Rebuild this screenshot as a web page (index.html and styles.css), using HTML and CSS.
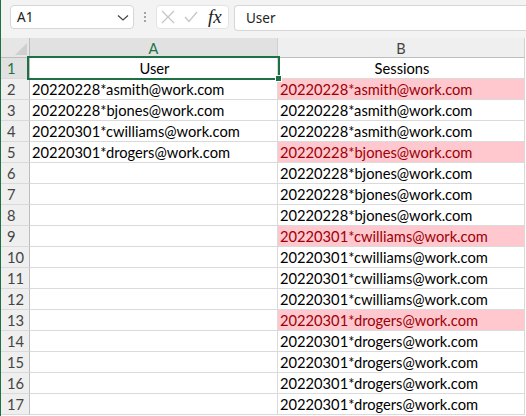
FILE: index.html
```html
<!DOCTYPE html>
<html>
<head>
<meta charset="utf-8">
<link rel="stylesheet" href="styles.css">
</head>
<body>
<div class="app">
  <div class="fbar">
    <div class="namebox">
      <span class="nb-text">A1</span>
      <svg class="chev" width="12" height="8" viewBox="0 0 12 8"><path d="M1 1.5 L6 6 L11 1.5" fill="none" stroke="#444" stroke-width="1.2"/></svg>
    </div>
    <div class="dots"><span></span><span></span><span></span></div>
    <div class="fbtns">
      <svg width="14" height="14" viewBox="0 0 14 14"><path d="M1 1 L13 13 M13 1 L1 13" stroke="#c4c4c4" stroke-width="1.2" fill="none"/></svg>
      <svg width="14" height="12" viewBox="0 0 14 12"><path d="M1 6 L5 10.5 L13 1" stroke="#c4c4c4" stroke-width="1.2" fill="none"/></svg>
      <span class="fx">fx</span>
    </div>
    <div class="finput">User</div>
  </div>
  <div class="sheet">
    <div class="row hdr">
      <div class="rh corner"><svg width="12" height="12" viewBox="0 0 12 12"><path d="M12 0 L12 12 L0 12 Z" fill="#cfcfcf"/></svg></div>
      <div class="ch ca sel">A</div>
      <div class="ch cb">B</div>
    </div>
    <div class="row"><div class="rh sel">1</div><div class="c ca center a1">User<div class="selbox"><div class="handle"></div></div></div><div class="c cb center">Sessions</div></div>
    <div class="row"><div class="rh">2</div><div class="c ca">20220228*asmith@work.com</div><div class="c cb dup">20220228*asmith@work.com</div></div>
    <div class="row"><div class="rh">3</div><div class="c ca">20220228*bjones@work.com</div><div class="c cb">20220228*asmith@work.com</div></div>
    <div class="row"><div class="rh">4</div><div class="c ca">20220301*cwilliams@work.com</div><div class="c cb">20220228*asmith@work.com</div></div>
    <div class="row"><div class="rh">5</div><div class="c ca">20220301*drogers@work.com</div><div class="c cb dup">20220228*bjones@work.com</div></div>
    <div class="row"><div class="rh">6</div><div class="c ca"></div><div class="c cb">20220228*bjones@work.com</div></div>
    <div class="row"><div class="rh">7</div><div class="c ca"></div><div class="c cb">20220228*bjones@work.com</div></div>
    <div class="row"><div class="rh">8</div><div class="c ca"></div><div class="c cb">20220228*bjones@work.com</div></div>
    <div class="row"><div class="rh">9</div><div class="c ca"></div><div class="c cb dup">20220301*cwilliams@work.com</div></div>
    <div class="row"><div class="rh">10</div><div class="c ca"></div><div class="c cb">20220301*cwilliams@work.com</div></div>
    <div class="row"><div class="rh">11</div><div class="c ca"></div><div class="c cb">20220301*cwilliams@work.com</div></div>
    <div class="row"><div class="rh">12</div><div class="c ca"></div><div class="c cb">20220301*cwilliams@work.com</div></div>
    <div class="row"><div class="rh">13</div><div class="c ca"></div><div class="c cb dup">20220301*drogers@work.com</div></div>
    <div class="row"><div class="rh">14</div><div class="c ca"></div><div class="c cb">20220301*drogers@work.com</div></div>
    <div class="row"><div class="rh">15</div><div class="c ca"></div><div class="c cb">20220301*drogers@work.com</div></div>
    <div class="row"><div class="rh">16</div><div class="c ca"></div><div class="c cb">20220301*drogers@work.com</div></div>
    <div class="row"><div class="rh">17</div><div class="c ca"></div><div class="c cb">20220301*drogers@work.com</div></div>
  </div>
</div>
</body>
</html>
```

FILE: styles.css
```css
html, body {
  margin: 0;
  padding: 0;
  background: #ffffff;
}
.app {
  width: 525px;
  height: 416px;
  border-left: 1px solid #1e7145;
  overflow: hidden;
  font-family: Lato, "Liberation Sans", sans-serif;
}
.fbar {
  height: 38px;
  background: #f3f3f3;
  display: flex;
  align-items: flex-start;
  padding-top: 5px;
  box-sizing: border-box;
  font-family: "Noto Sans", "Open Sans", sans-serif;
}
.namebox {
  margin-left: 9px;
  width: 124px;
  height: 24px;
  background: #fff;
  border: 1px solid #d6d6d6;
  border-radius: 4px;
  display: flex;
  align-items: center;
  justify-content: space-between;
  padding: 0 4px 0 6px;
  box-sizing: border-box;
  font-size: 13.5px;
  color: #222;
}
.chev { margin-top: 1px; }
.dots {
  width: 22px;
  height: 24px;
  display: flex;
  flex-direction: column;
  align-items: center;
  justify-content: center;
  gap: 2px;
}
.dots span {
  width: 2px;
  height: 2px;
  background: #888;
  border-radius: 1px;
}
.fbtns {
  width: 73px;
  height: 24px;
  background: #fff;
  border: 1px solid #e3e3e3;
  border-radius: 4px;
  box-sizing: border-box;
  display: flex;
  align-items: center;
  padding-left: 4px;
  gap: 9px;
}
.fx {
  font-family: "Liberation Serif", serif;
  font-style: italic;
  font-size: 19px;
  color: #222;
  margin-left: 1px;
  line-height: 1;
  margin-top: -2px;
}
.finput {
  margin-left: 5px;
  flex: 1;
  height: 26px;
  background: #fff;
  border: 1px solid #d6d6d6;
  border-right: none;
  border-radius: 4px 0 0 4px;
  box-sizing: border-box;
  padding-left: 11px;
  font-size: 13.5px;
  line-height: 24px;
  color: #222;
}
.sheet {
  display: flex;
  flex-direction: column;
}
.row {
  display: flex;
  height: 21px;
}
.row.hdr {
  height: 20px;
}
.rh {
  width: 28px;
  flex: none;
  background: #efefef;
  border-right: 1px solid #bdbdbd;
  border-bottom: 1px solid #dadada;
  box-sizing: content-box;
  height: 20px;
  font-size: 14.7px;
  line-height: 21px;
  color: #444;
  text-align: left;
  padding-left: 0;
  text-indent: 6px;
}
.rh.sel {
  background: #e1e1e1;
  color: #1e7145;
}
.corner {
  height: 19px;
  background: #e6e6e6;
  border-bottom: 1px solid #bdbdbd;
  position: relative;
  display: flex;
  align-items: flex-end;
  justify-content: flex-end;
}
.corner svg { margin: 0 2px 2px 0; }
.ch {
  height: 19px;
  border-bottom: 1px solid #bdbdbd;
  border-right: 1px solid #d0d0d0;
  background: #efefef;
  text-align: center;
  font-size: 14.5px;
  line-height: 21px;
  color: #444;
}
.ch.sel {
  background: #e1e1e1;
  color: #1e7145;
}
.ca { width: 247px; flex: none; }
.cb { width: 246px; flex: none; }
.c {
  height: 20px;
  border-right: 1px solid #dadada;
  border-bottom: 1px solid #dadada;
  font-size: 14.7px;
  line-height: 21px;
  padding-left: 2px;
  box-sizing: content-box;
  color: #000;
  white-space: nowrap;
  overflow: visible;
}
.c.ca { width: 245px; }
.c.cb { width: 244px; }
.center { text-align: center; }
.dup {
  background: #ffc7ce;
  color: #9c0006;
}
.a1 { position: relative; }
.selbox {
  position: absolute;
  left: -3px;
  top: -2px;
  right: -3px;
  bottom: -2px;
  border: 2px solid #1e7145;
  pointer-events: none;
}
.handle {
  position: absolute;
  right: -4px;
  bottom: -4px;
  width: 5px;
  height: 5px;
  background: #1e7145;
  border: 1px solid #fff;
}
```
